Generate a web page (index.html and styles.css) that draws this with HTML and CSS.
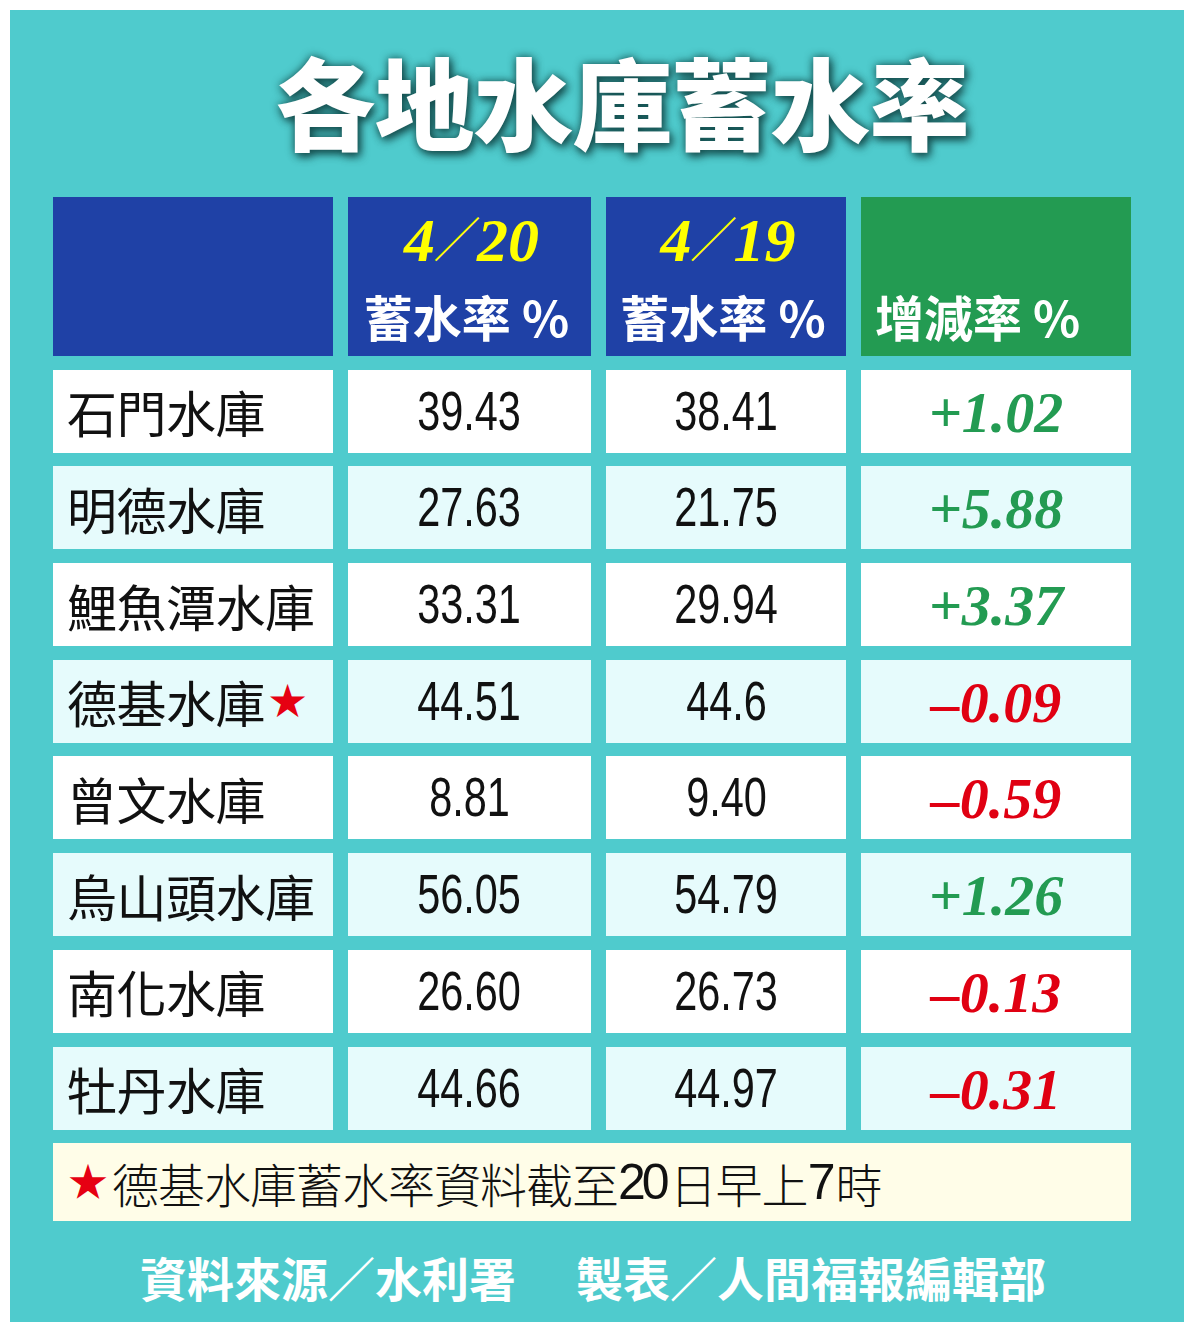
FILE: index.html
```html
<!DOCTYPE html>
<html lang="zh-Hant">
<head>
<meta charset="utf-8">
<title>各地水庫蓄水率</title>
<link rel="stylesheet" href="styles.css">
</head>
<body>
<div class="frame">
  <h1 class="title">各地水庫蓄水率</h1>
  <div class="table">
    <div class="hcell blue"></div>
    <div class="hcell blue center"><span class="date">4<span class="slash">／</span>20</span><span class="htext">蓄水率 %</span></div>
    <div class="hcell blue center"><span class="date">4<span class="slash">／</span>19</span><span class="htext">蓄水率 %</span></div>
    <div class="hcell green"><span class="htext">增減率 %</span></div>

    <div class="cell name">石門水庫</div><div class="cell num"><span class="v">39.43</span></div><div class="cell num"><span class="v">38.41</span></div><div class="cell chg up">+1.02</div>
    <div class="cell name alt">明德水庫</div><div class="cell num alt"><span class="v">27.63</span></div><div class="cell num alt"><span class="v">21.75</span></div><div class="cell chg up alt">+5.88</div>
    <div class="cell name">鯉魚潭水庫</div><div class="cell num"><span class="v">33.31</span></div><div class="cell num"><span class="v">29.94</span></div><div class="cell chg up">+3.37</div>
    <div class="cell name alt">德基水庫<span class="star">★</span></div><div class="cell num alt"><span class="v">44.51</span></div><div class="cell num alt"><span class="v">44.6</span></div><div class="cell chg down alt">–0.09</div>
    <div class="cell name">曾文水庫</div><div class="cell num"><span class="v">8.81</span></div><div class="cell num"><span class="v">9.40</span></div><div class="cell chg down">–0.59</div>
    <div class="cell name alt">烏山頭水庫</div><div class="cell num alt"><span class="v">56.05</span></div><div class="cell num alt"><span class="v">54.79</span></div><div class="cell chg up alt">+1.26</div>
    <div class="cell name">南化水庫</div><div class="cell num"><span class="v">26.60</span></div><div class="cell num"><span class="v">26.73</span></div><div class="cell chg down">–0.13</div>
    <div class="cell name alt">牡丹水庫</div><div class="cell num alt"><span class="v">44.66</span></div><div class="cell num alt"><span class="v">44.97</span></div><div class="cell chg down alt">–0.31</div>

    <div class="note"><span class="nstar">★</span>德基水庫蓄水率資料截至<span class="ndig">20</span>日早上<span class="ndig">7</span>時</div>
  </div>
  <div class="footer"><span>資料來源／水利署</span><span class="credit">製表／人間福報編輯部</span></div>
</div>
</body>
</html>
```

FILE: styles.css
```css
html, body {
  margin: 0;
  padding: 0;
  background: #ffffff;
}
body {
  font-family: "Noto Sans CJK TC", "Noto Sans", sans-serif;
}
.frame {
  margin: 10px 0 0 10px;
  width: 1174px;
  height: 1312px;
  background: #4fcbcd;
  box-sizing: border-box;
  padding: 0 53px 0 43px;
  display: flex;
  flex-direction: column;
}
.title {
  margin: 0;
  height: 187px;
  display: flex;
  align-items: center;
  justify-content: center;
  padding-left: 60px;
  padding-bottom: 8px;
  box-sizing: border-box;
  font-size: 100px;
  font-weight: 900;
  line-height: 1;
  color: #ffffff;
  letter-spacing: -1px;
  text-shadow: 0 0 8px rgba(20, 80, 80, 0.9), 3px 4px 9px rgba(15, 60, 60, 0.85);
}
.table {
  display: grid;
  grid-template-columns: 280px 243px 240px 270px;
  grid-template-rows: 159px repeat(8, 83px) 78px;
  column-gap: 15px;
  row-gap: 13.7px;
}
.hcell {
  display: flex;
  flex-direction: column;
  justify-content: flex-end;
  padding-bottom: 12px;
  box-sizing: border-box;
  color: #ffffff;
}
.hcell.center {
  align-items: center;
}
.blue {
  background: #1f41a6;
}
.green {
  background: #239b52;
  padding-left: 14px;
}
.date {
  font-family: "Liberation Serif", serif;
  font-style: italic;
  font-weight: 700;
  font-size: 62px;
  line-height: 56px;
  height: 56px;
  margin-bottom: 20px;
  color: #ffff00;
  padding-left: 4px;
}
.slash {
  font-family: "Noto Sans CJK TC", sans-serif;
  font-style: normal;
  font-weight: 300;
  font-size: 48px;
  margin: 0 -4px 0 -2px;
  position: relative;
  top: -4px;
}
.htext {
  font-size: 49px;
  font-weight: 700;
  line-height: 56px;
  white-space: nowrap;
  padding-right: 6px;
}
.cell {
  background: #ffffff;
  display: flex;
  align-items: center;
  box-sizing: border-box;
}
.cell.alt {
  background: #e6fbfc;
}
.name {
  padding-left: 14px;
  font-size: 50px;
  font-weight: 400;
  color: #111111;
  white-space: nowrap;
  letter-spacing: -0.5px;
}
.star {
  color: #e60012;
  font-size: 46px;
  margin-left: 2px;
  font-family: "DejaVu Sans", sans-serif;
}
.num {
  justify-content: center;
  font-family: "Liberation Sans", sans-serif;
  font-size: 56px;
  color: #111111;
  padding-bottom: 2px;
}
.v {
  display: inline-block;
  transform: scaleX(0.74);
}
.chg {
  justify-content: center;
  font-family: "Liberation Serif", serif;
  font-style: italic;
  font-weight: 700;
  font-size: 58px;
  padding-top: 2px;
}
.up {
  color: #239b52;
}
.down {
  color: #e00012;
}
.note {
  grid-column: 1 / -1;
  background: #fffde8;
  display: flex;
  align-items: center;
  padding-left: 14px;
  font-size: 47px;
  font-weight: 300;
  color: #111111;
  white-space: nowrap;
  letter-spacing: -1px;
}
.nstar {
  color: #e60012;
  font-family: "DejaVu Sans", sans-serif;
  font-size: 42px;
  margin-right: 4px;
}
.ndig {
  font-family: "Liberation Sans", sans-serif;
  font-size: 50px;
  letter-spacing: -4px;
  margin-right: 4px;
}
.footer {
  flex: 1;
  display: flex;
  align-items: center;
  justify-content: center;
  padding-top: 10px;
  padding-left: 2px;
  font-size: 47px;
  font-weight: 700;
  color: #ffffff;
  white-space: nowrap;
}
.credit {
  margin-left: 60px;
}
```
